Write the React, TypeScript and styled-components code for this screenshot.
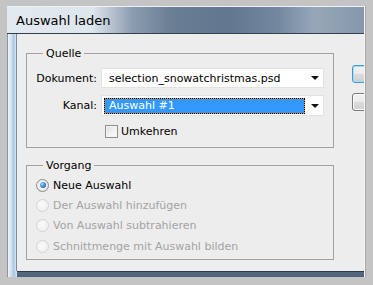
import React from 'react';
import styled, { createGlobalStyle } from 'styled-components';

const GlobalStyle = createGlobalStyle`
  html, body {
    margin: 0;
    padding: 0;
    background: #c4c4c4;
  }
  body {
    font-family: "DejaVu Sans", sans-serif;
    font-size: 11px;
    color: #000;
  }
`;

const Window = styled.div`
  margin: 6px 0 0 7px;
  width: 357px;
  height: 271px;
  display: flex;
  flex-direction: column;
  border-right: 1px solid #f6f6f6;
  box-shadow: 1px 0 0 #a9a9a9;
`;

const TitleBar = styled.div`
  height: 28px;
  flex: none;
  display: flex;
  align-items: center;
  padding-left: 9px;
  box-sizing: border-box;
  border-top: 1px solid #eef2f6;
  border-bottom: 1px solid #33414f;
  background: linear-gradient(
    90deg,
    #e3e9f0 0%,
    #dde5ed 24%,
    #8d9db0 35%,
    #6a7e94 46%,
    #627690 62%,
    #7388a0 76%,
    #97a7b8 86%,
    #8597aa 100%
  );
`;

const Title = styled.span`
  font-size: 13px;
  color: #000;
`;

const Middle = styled.div`
  flex: 1;
  display: flex;
  min-height: 0;
`;

const SideFrame = styled.div`
  width: 10px;
  box-sizing: border-box;
  border-left: 1px solid #8c949c;
  border-right: 1px solid #7d8a98;
  background: linear-gradient(90deg, #f1f5f9 0%, #cfe0f1 45%, #a9c7e6 70%, #dbe7f2 100%);
`;

const Content = styled.div`
  flex: 1;
  display: flex;
  background: #ededed;
  overflow: hidden;
  padding: 13px 0 0 9px;
`;

const Groups = styled.div`
  width: 308px;
  flex: none;
  display: flex;
  flex-direction: column;
  gap: 11px;
`;

const Group = styled.fieldset<{ $bottom: number }>`
  margin: 0;
  padding: 0 8px ${(p) => p.$bottom}px 9px;
  border: 1px solid #a2a2a2;
  min-width: 0;
`;

const Legend = styled.legend`
  margin-left: 7px;
  padding: 0 3px;
  line-height: 13px;
  font-size: 11px;
`;

const FormGrid = styled.div`
  margin-top: 8px;
  display: grid;
  grid-template-columns: 61px 223px;
  column-gap: 4px;
  row-gap: 7px;
  align-items: center;
`;

const Label = styled.span`
  text-align: right;
`;

const Select = styled.div<{ $h: number }>`
  height: ${(p) => p.$h}px;
  box-sizing: border-box;
  background: #fff;
  border: 1px solid #e2e2e2;
  display: flex;
  align-items: center;
  padding: 0 4px 0 2px;
  position: relative;
`;

const SelectText = styled.span<{ $selected?: boolean }>`
  flex: 1;
  height: 16px;
  box-sizing: border-box;
  display: flex;
  align-items: center;
  padding-left: 4px;
  margin-right: 14px;
  color: ${(p) => (p.$selected ? '#fff' : '#000')};
  background: ${(p) => (p.$selected ? '#3399ff' : 'transparent')};
  border: 1px solid ${(p) => (p.$selected ? '#e7902c' : 'transparent')};
  outline: ${(p) => (p.$selected ? '1px dotted #000' : 'none')};
  outline-offset: -1px;
`;

const Arrow = styled.span`
  position: absolute;
  right: 4px;
  top: 50%;
  margin-top: -2px;
  width: 0;
  height: 0;
  border-left: 4px solid transparent;
  border-right: 4px solid transparent;
  border-top: 4px solid #111;
`;

const CheckRow = styled.label`
  grid-column: 2;
  margin-top: 2px;
  padding-left: 4px;
  display: flex;
  align-items: center;
  gap: 3px;
  height: 13px;
`;

const CheckBox = styled.span`
  width: 13px;
  height: 13px;
  box-sizing: border-box;
  border: 1px solid #8f8f8f;
  background: linear-gradient(135deg, #dcdcdc 0%, #f4f4f4 60%, #fbfbfb 100%);
  box-shadow: inset 0 0 0 1px #f4f4f4;
`;

const RadioList = styled.div`
  margin-top: 3px;
  display: flex;
  flex-direction: column;
`;

const RadioRow = styled.div<{ $disabled?: boolean }>`
  height: 20.4px;
  display: flex;
  align-items: center;
  gap: 4px;
  color: ${(p) => (p.$disabled ? '#a3a3a3' : '#000')};
`;

const RadioDot = styled.span<{ $checked?: boolean; $disabled?: boolean }>`
  width: 13px;
  height: 13px;
  box-sizing: border-box;
  border-radius: 50%;
  flex: none;
  display: flex;
  align-items: center;
  justify-content: center;
  border: 1px solid ${(p) => (p.$disabled ? '#d4d4d4' : '#8a8a8a')};
  background: ${(p) =>
    p.$disabled
      ? 'radial-gradient(circle at 40% 40%, #fafafa, #ececec)'
      : 'radial-gradient(circle at 40% 40%, #ffffff, #dedede)'};
  &::after {
    content: '';
    display: ${(p) => (p.$checked ? 'block' : 'none')};
    width: 6px;
    height: 6px;
    border-radius: 50%;
    background: radial-gradient(circle at 35% 35%, #9fd4ff, #1f6fc4 70%, #174e8c);
  }
`;

const Buttons = styled.div`
  margin: 18px 0 0 18px;
  display: flex;
  flex-direction: column;
  gap: 10px;
`;

const DialogButton = styled.div<{ $default?: boolean }>`
  width: 75px;
  height: 18px;
  flex: none;
  box-sizing: border-box;
  border-radius: 3px;
  border: 1px solid ${(p) => (p.$default ? '#3c9cd6' : '#7a7a7a')};
  box-shadow: ${(p) => (p.$default ? 'inset 0 0 0 1px #a6dcf6' : 'inset 0 0 0 1px #fafafa')};
  background: linear-gradient(180deg, #f2f2f2 0%, #ebebeb 48%, #dcdcdc 52%, #cfcfcf 100%);
`;

const BottomFrame = styled.div`
  height: 6px;
  flex: none;
  display: flex;
`;

const BottomLeft = styled.div`
  width: 10px;
  background: linear-gradient(90deg, #f1f5f9, #a9c7e6 70%, #dbe7f2);
  border-left: 1px solid #8c949c;
  box-sizing: border-box;
`;

const BottomBand = styled.div`
  flex: 1;
  border-top: 1px solid #2d3845;
  background: linear-gradient(180deg, #55697f, #4e6279);
`;

const radios = [
  { label: 'Neue Auswahl', checked: true, disabled: false },
  { label: 'Der Auswahl hinzufügen', checked: false, disabled: true },
  { label: 'Von Auswahl subtrahieren', checked: false, disabled: true },
  { label: 'Schnittmenge mit Auswahl bilden', checked: false, disabled: true },
];

export default function App() {
  return (
    <>
      <GlobalStyle />
      <Window>
        <TitleBar>
          <Title>Auswahl laden</Title>
        </TitleBar>
        <Middle>
          <SideFrame />
          <Content>
            <Groups>
              <Group $bottom={9}>
                <Legend>Quelle</Legend>
                <FormGrid>
                  <Label>Dokument:</Label>
                  <Select $h={20}>
                    <SelectText>selection_snowatchristmas.psd</SelectText>
                    <Arrow />
                  </Select>
                  <Label>Kanal:</Label>
                  <Select $h={21}>
                    <SelectText $selected>Auswahl #1</SelectText>
                    <Arrow />
                  </Select>
                  <CheckRow>
                    <CheckBox />
                    <span>Umkehren</span>
                  </CheckRow>
                </FormGrid>
              </Group>
              <Group $bottom={2}>
                <Legend>Vorgang</Legend>
                <RadioList>
                  {radios.map((r) => (
                    <RadioRow key={r.label} $disabled={r.disabled}>
                      <RadioDot $checked={r.checked} $disabled={r.disabled} />
                      <span>{r.label}</span>
                    </RadioRow>
                  ))}
                </RadioList>
              </Group>
            </Groups>
            <Buttons>
              <DialogButton $default />
              <DialogButton />
            </Buttons>
          </Content>
        </Middle>
        <BottomFrame>
          <BottomLeft />
          <BottomBand />
        </BottomFrame>
      </Window>
    </>
  );
}
